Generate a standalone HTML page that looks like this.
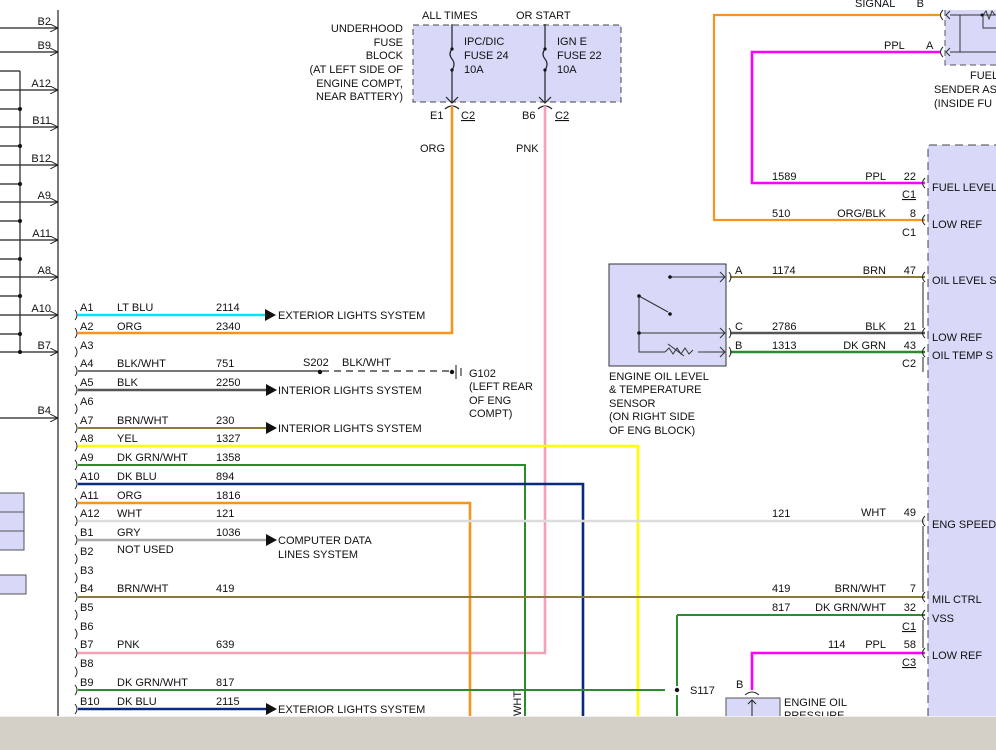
<!DOCTYPE html>
<html><head><meta charset="utf-8"><style>
html,body{margin:0;padding:0;background:#fff;width:996px;height:750px;overflow:hidden}
svg{display:block}
text{font-family:"Liberation Sans",Arial,sans-serif;font-size:11px;fill:#111}
</style></head><body>
<svg width="996" height="750" viewBox="0 0 996 750" xmlns="http://www.w3.org/2000/svg">
<defs>
<marker id="ar" markerWidth="8" markerHeight="8" refX="8" refY="4" orient="auto" markerUnits="userSpaceOnUse"><path d="M0,0 L8,4 L0,8" fill="none" stroke="#222" stroke-width="1"/></marker>
</defs>
<g stroke="#222" stroke-width="1.2" fill="none">
<line x1="58" y1="10" x2="58" y2="716"/>
<line x1="0" y1="71" x2="20" y2="71"/>
<line x1="20" y1="71" x2="20" y2="352"/>
</g>
<g stroke="#222" stroke-width="1.2" marker-end="url(#ar)">
<line x1="0" y1="28" x2="58" y2="28"/><line x1="0" y1="52" x2="58" y2="52"/>
<line x1="0" y1="90" x2="58" y2="90"/><line x1="0" y1="127" x2="58" y2="127"/>
<line x1="0" y1="165" x2="58" y2="165"/><line x1="0" y1="202" x2="58" y2="202"/>
<line x1="0" y1="240" x2="58" y2="240"/><line x1="0" y1="277" x2="58" y2="277"/>
<line x1="0" y1="315" x2="58" y2="315"/><line x1="0" y1="352" x2="58" y2="352"/>
<line x1="0" y1="418" x2="58" y2="418"/>
</g>
<g stroke="#222" stroke-width="1.2">
<line x1="0" y1="109" x2="20" y2="109"/><line x1="0" y1="146" x2="20" y2="146"/>
<line x1="0" y1="184" x2="20" y2="184"/><line x1="0" y1="221" x2="20" y2="221"/>
<line x1="0" y1="259" x2="20" y2="259"/><line x1="0" y1="296" x2="20" y2="296"/>
<line x1="0" y1="334" x2="20" y2="334"/>
</g>
<g fill="#111"><circle cx="20" cy="109" r="2"/><circle cx="20" cy="146" r="2"/><circle cx="20" cy="184" r="2"/><circle cx="20" cy="221" r="2"/><circle cx="20" cy="259" r="2"/><circle cx="20" cy="296" r="2"/><circle cx="20" cy="334" r="2"/><circle cx="20" cy="352" r="2"/></g>
<g text-anchor="end">
<text x="51" y="25">B2</text><text x="51" y="49">B9</text><text x="51" y="87">A12</text><text x="51" y="124">B11</text>
<text x="51" y="162">B12</text><text x="51" y="199">A9</text><text x="51" y="237">A11</text><text x="51" y="274">A8</text>
<text x="51" y="312">A10</text><text x="51" y="349">B7</text><text x="51" y="414">B4</text>
</g>
<rect x="-1" y="493" width="25" height="57" fill="#d8d8f8" stroke="#555"/>
<line x1="0" y1="512" x2="24" y2="512" stroke="#555"/><line x1="0" y1="531" x2="24" y2="531" stroke="#555"/>
<rect x="-1" y="575" width="27" height="19" fill="#d8d8f8" stroke="#555"/>

<rect x="413" y="25" width="208" height="77" fill="#d8d8f8" stroke="#444" stroke-dasharray="6,4"/>
<g text-anchor="end"><text x="403" y="32">UNDERHOOD</text><text x="403" y="46">FUSE</text><text x="403" y="59">BLOCK</text><text x="403" y="73">(AT LEFT SIDE OF</text><text x="403" y="87">ENGINE COMPT,</text><text x="403" y="100">NEAR BATTERY)</text></g>
<text x="422" y="19">ALL TIMES</text><text x="516" y="19">OR START</text>
<text x="464" y="45">IPC/DIC</text><text x="464" y="59">FUSE 24</text><text x="464" y="73">10A</text>
<text x="557" y="45">IGN E</text><text x="557" y="59">FUSE 22</text><text x="557" y="73">10A</text>
<g stroke="#222" stroke-width="1.2" fill="none">
<path d="M452,24 V49 M452,70 V103 M452,49 q-4,5 0,10 q4,5 0,11"/>
<path d="M545,24 V49 M545,70 V103 M545,49 q-4,5 0,10 q4,5 0,11"/>
<path d="M446,97 L452,103 L458,97 M539,97 L545,103 L551,97"/>
<path d="M445,109 q7,-6 14,0 M538,109 q7,-6 14,0"/>
</g>
<g fill="#111"><circle cx="452" cy="49" r="1.6"/><circle cx="452" cy="70" r="1.6"/><circle cx="545" cy="49" r="1.6"/><circle cx="545" cy="70" r="1.6"/></g>
<text x="430" y="119">E1</text><text x="461" y="119" text-decoration="underline">C2</text>
<text x="522" y="119">B6</text><text x="555" y="119" text-decoration="underline">C2</text>
<text x="420" y="152">ORG</text><text x="516" y="152">PNK</text>

<g fill="none" stroke-width="2.6">
<path d="M452,106 V333 H78" stroke="#f7941d"/>
<path d="M545,106 V653 H78" stroke="#f4a0b5"/>
<line x1="78" y1="315" x2="265" y2="315" stroke="#00e5ff"/>
<line x1="78" y1="371" x2="320" y2="371" stroke="#777" stroke-width="2"/>
<line x1="78" y1="390" x2="270" y2="390" stroke="#555"/>
<line x1="78" y1="428" x2="270" y2="428" stroke="#8b7a35" stroke-width="2"/>
<path d="M78,446 H638 V716" stroke="#ffff00"/>
<path d="M78,465 H525 V716" stroke="#2d8a2d" stroke-width="2"/>
<path d="M78,484 H583 V716" stroke="#0a2a80"/>
<path d="M78,503 H470 V716" stroke="#f7941d"/>
<line x1="78" y1="521" x2="925" y2="521" stroke="#dcdcdc"/>
<line x1="78" y1="540" x2="270" y2="540" stroke="#aaa"/>
<line x1="78" y1="597" x2="925" y2="597" stroke="#8b7a35" stroke-width="2"/>
<line x1="78" y1="690" x2="665" y2="690" stroke="#2d8a2d" stroke-width="2"/>
<line x1="78" y1="709" x2="270" y2="709" stroke="#0a2a80"/>
</g>
<line x1="322" y1="371" x2="452" y2="371" stroke="#777" stroke-width="2" stroke-dasharray="7,5"/>
<g fill="#111"><circle cx="320" cy="372" r="2.2"/><circle cx="452" cy="372" r="2.2"/></g>
<path d="M456,365 V379 M461,368 V376" stroke="#111"/>
<g fill="#111">
<path d="M265,309 L276,315 L265,321Z"/><path d="M266,384 L277,390 L266,396Z"/><path d="M266,422 L277,428 L266,434Z"/>
<path d="M266,534 L277,540 L266,546Z"/><path d="M266,703 L277,709 L266,715Z"/>
</g>
<text x="278" y="319">EXTERIOR LIGHTS SYSTEM</text>
<text x="278" y="394">INTERIOR LIGHTS SYSTEM</text>
<text x="278" y="432">INTERIOR LIGHTS SYSTEM</text>
<text x="278" y="544">COMPUTER DATA</text><text x="278" y="558">LINES SYSTEM</text>
<text x="278" y="713">EXTERIOR LIGHTS SYSTEM</text>
<text x="303" y="366">S202</text><text x="342" y="366">BLK/WHT</text>
<text x="469" y="377">G102</text><text x="469" y="390">(LEFT REAR</text><text x="469" y="404">OF ENG</text><text x="469" y="417">COMPT)</text>
<text transform="translate(521,716) rotate(-90)">WHT</text>

<g fill="none" stroke="#222" stroke-width="1">
<path d="M75,310 q4,5 0,10 M75,328 q4,5 0,10 M75,347 q4,5 0,10 M75,366 q4,5 0,10 M75,385 q4,5 0,10 M75,404 q4,5 0,10 M75,423 q4,5 0,10 M75,441 q4,5 0,10 M75,460 q4,5 0,10 M75,479 q4,5 0,10 M75,498 q4,5 0,10 M75,516 q4,5 0,10 M75,535 q4,5 0,10 M75,554 q4,5 0,10 M75,573 q4,5 0,10 M75,592 q4,5 0,10 M75,610 q4,5 0,10 M75,629 q4,5 0,10 M75,648 q4,5 0,10 M75,667 q4,5 0,10 M75,685 q4,5 0,10 M75,704 q4,5 0,10"/>
</g>
<g>
<text x="80" y="311">A1</text><text x="117" y="311">LT BLU</text><text x="216" y="311">2114</text>
<text x="80" y="330">A2</text><text x="117" y="330">ORG</text><text x="216" y="330">2340</text>
<text x="80" y="349">A3</text>
<text x="80" y="367">A4</text><text x="117" y="367">BLK/WHT</text><text x="216" y="367">751</text>
<text x="80" y="386">A5</text><text x="117" y="386">BLK</text><text x="216" y="386">2250</text>
<text x="80" y="405">A6</text>
<text x="80" y="424">A7</text><text x="117" y="424">BRN/WHT</text><text x="216" y="424">230</text>
<text x="80" y="442">A8</text><text x="117" y="442">YEL</text><text x="216" y="442">1327</text>
<text x="80" y="461">A9</text><text x="117" y="461">DK GRN/WHT</text><text x="216" y="461">1358</text>
<text x="80" y="480">A10</text><text x="117" y="480">DK BLU</text><text x="216" y="480">894</text>
<text x="80" y="499">A11</text><text x="117" y="499">ORG</text><text x="216" y="499">1816</text>
<text x="80" y="517">A12</text><text x="117" y="517">WHT</text><text x="216" y="517">121</text>
<text x="80" y="536">B1</text><text x="117" y="536">GRY</text><text x="216" y="536">1036</text>
<text x="80" y="555">B2</text><text x="117" y="553">NOT USED</text>
<text x="80" y="574">B3</text>
<text x="80" y="592">B4</text><text x="117" y="592">BRN/WHT</text><text x="216" y="592">419</text>
<text x="80" y="611">B5</text><text x="80" y="630">B6</text>
<text x="80" y="648">B7</text><text x="117" y="648">PNK</text><text x="216" y="648">639</text>
<text x="80" y="667">B8</text>
<text x="80" y="686">B9</text><text x="117" y="686">DK GRN/WHT</text><text x="216" y="686">817</text>
<text x="80" y="705">B10</text><text x="117" y="705">DK BLU</text><text x="216" y="705">2115</text>
</g>

<rect x="928" y="145" width="80" height="580" fill="#d8d8f8"/>
<path d="M928,716 V145 H996" fill="none" stroke="#444" stroke-dasharray="8,5"/>
<rect x="945" y="10" width="60" height="55" fill="#d8d8f8"/>
<path d="M945,10 V65 H996" fill="none" stroke="#555" stroke-dasharray="6,4"/>
<path d="M950,15 H996 M950,52 H996 M960,15 V52" fill="none" stroke="#333"/>
<path d="M950,11 l-4,4 l4,4 M950,48 l-4,4 l4,4" fill="none" stroke="#333"/>
<path d="M983,15 v13 h13 M983,15 l3,-4 l3,8 l3,-8 l3,4" fill="none" stroke="#333"/>
<circle cx="982" cy="15" r="1.5" fill="#111"/>
<text x="970" y="79">FUEL</text><text x="934" y="93">SENDER AS</text><text x="934" y="107">(INSIDE FU</text>
<g fill="none" stroke-width="2.6">
<path d="M940,15 H714 V220 H925" stroke="#f7941d" stroke-width="2.2"/>
<path d="M940,52 H752 V183 H925" stroke="#ff00ff"/>
<line x1="730" y1="277" x2="925" y2="277" stroke="#8b7a35" stroke-width="2"/>
<line x1="730" y1="333" x2="925" y2="333" stroke="#555"/>
<line x1="730" y1="352" x2="925" y2="352" stroke="#2d8a2d"/>
<path d="M925,653 H752 V690" stroke="#ff00ff"/>
<path d="M677,615 H925" stroke="#2d8a2d" stroke-width="2"/>
<path d="M677,615 V686 M677,695 V716" stroke="#2d8a2d" stroke-width="2"/>
</g>
<circle cx="677" cy="690" r="2.2" fill="#111"/><text x="690" y="694">S117</text>
<g fill="none" stroke="#222" stroke-width="1">
<path d="M943,10 q-5,5 0,10 M943,47 q-5,5 0,10 M925,178 q-5,5 0,10 M925,215 q-5,5 0,10 M925,272 q-5,5 0,10 M925,328 q-5,5 0,10 M925,347 q-5,5 0,10 M925,516 q-5,5 0,10 M925,592 q-5,5 0,10 M925,610 q-5,5 0,10 M925,648 q-5,5 0,10"/>
<path d="M923,282 V328 M923,357 V372 M923,526 V592 M923,620 V648"/>
</g>
<text x="855" y="7">SIGNAL</text><text x="924" y="7" text-anchor="end">B</text>
<text x="884" y="49">PPL</text><text x="926" y="49">A</text>
<text x="772" y="180">1589</text><text x="886" y="180" text-anchor="end">PPL</text><text x="916" y="180" text-anchor="end">22</text><text x="902" y="198" text-decoration="underline">C1</text>
<text x="772" y="217">510</text><text x="886" y="217" text-anchor="end">ORG/BLK</text><text x="916" y="217" text-anchor="end">8</text><text x="902" y="236">C1</text>
<text x="772" y="274">1174</text><text x="886" y="274" text-anchor="end">BRN</text><text x="916" y="274" text-anchor="end">47</text>
<text x="772" y="330">2786</text><text x="886" y="330" text-anchor="end">BLK</text><text x="916" y="330" text-anchor="end">21</text>
<text x="772" y="349">1313</text><text x="886" y="349" text-anchor="end">DK GRN</text><text x="916" y="349" text-anchor="end">43</text><text x="902" y="367">C2</text>
<text x="772" y="517">121</text><text x="886" y="516" text-anchor="end">WHT</text><text x="916" y="516" text-anchor="end">49</text>
<text x="772" y="592">419</text><text x="886" y="592" text-anchor="end">BRN/WHT</text><text x="916" y="592" text-anchor="end">7</text>
<text x="772" y="611">817</text><text x="886" y="611" text-anchor="end">DK GRN/WHT</text><text x="916" y="611" text-anchor="end">32</text><text x="902" y="630" text-decoration="underline">C1</text>
<text x="828" y="648">114</text><text x="886" y="648" text-anchor="end">PPL</text><text x="916" y="648" text-anchor="end">58</text><text x="902" y="666" text-decoration="underline">C3</text>
<text x="932" y="191">FUEL LEVEL</text><text x="932" y="228">LOW REF</text><text x="932" y="284">OIL LEVEL S</text>
<text x="932" y="341">LOW REF</text><text x="932" y="359">OIL TEMP S</text><text x="932" y="528">ENG SPEED</text>
<text x="932" y="603">MIL CTRL</text><text x="932" y="622">VSS</text><text x="932" y="659">LOW REF</text>

<rect x="609" y="264" width="117" height="102" fill="#d8d8f8" stroke="#333"/>
<g stroke="#333" fill="none" stroke-width="1">
<path d="M670,277 H725 M639,296 V352 H665 M639,333 H725 M698,352 H725"/>
<path d="M720,272 l5,5 l-5,5 M720,328 l5,5 l-5,5 M720,347 l5,5 l-5,5"/>
<path d="M639,296 L668,312"/>
<path d="M665,352 l4,-4 l4,6 l4,-6 l4,6 l4,-6 l4,6 l4,-4"/>
<path d="M668,344 l16,12"/>
<path d="M729,272 q4,5 0,10 M729,328 q4,5 0,10 M729,347 q4,5 0,10"/>
</g>
<g fill="#111"><circle cx="670" cy="277" r="1.8"/><circle cx="639" cy="296" r="1.8"/><circle cx="670" cy="314" r="1.8"/><circle cx="639" cy="333" r="1.8"/></g>
<text x="735" y="274">A</text><text x="735" y="330">C</text><text x="735" y="349">B</text>
<text x="609" y="380">ENGINE OIL LEVEL</text><text x="609" y="393">&amp; TEMPERATURE</text><text x="609" y="407">SENSOR</text><text x="609" y="420">(ON RIGHT SIDE</text><text x="609" y="434">OF ENG BLOCK)</text>

<rect x="726" y="698" width="54" height="30" fill="#d8d8f8" stroke="#555"/>
<path d="M745,695 q7,-6 14,0 M752,700 V716 M748,704 l4,-4 l4,4" fill="none" stroke="#222"/>
<text x="736" y="688">B</text>
<text x="784" y="706">ENGINE OIL</text><text x="784" y="719">PRESSURE</text>

<rect x="0" y="716" width="996" height="34" fill="#d4d0c8"/>
<line x1="0" y1="716.5" x2="996" y2="716.5" stroke="#eeeeee"/>
</svg>
</body></html>
